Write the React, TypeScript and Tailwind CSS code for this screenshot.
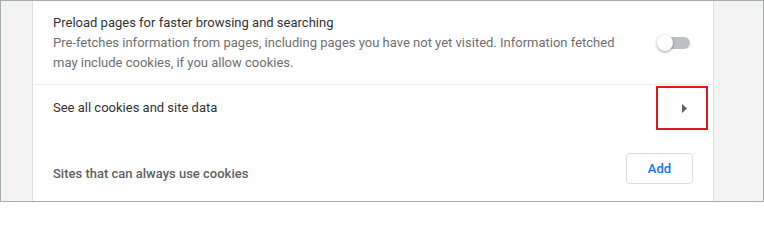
const Toggle = () => (
  <div className="relative w-[34px] h-[16px] shrink-0">
    <div className="absolute left-[6px] top-[2px] w-[27px] h-[12px] rounded-full bg-[#bdc1c6]" />
    <div className="absolute left-0 top-0 w-[16px] h-[16px] rounded-full bg-white shadow-[0_1px_3px_rgba(0,0,0,0.4)]" />
  </div>
);

export default function App() {
  return (
    <div
      className="w-[764px] h-[202px] flex border border-[#a5afac] bg-[#f3f3f3] overflow-hidden"
      style={{ fontFamily: "Roboto, 'Liberation Sans', sans-serif" }}
    >
      <div className="w-[31px] shrink-0" />

      <div className="relative w-[682px] shrink-0 bg-white border-x border-[#dedede] text-[13px]">
        <div className="h-[84px] flex items-center pl-[20px] pr-[22px] border-b border-[#eaeaea]">
          <div className="flex-1 leading-[20px]">
            <div className="text-[#333333]">
              Preload pages for faster browsing and searching
            </div>
            <div className="text-[#6f6f6f]">
              Pre-fetches information from pages, including pages you have not
              yet visited. Information fetched
              <br />
              may include cookies, if you allow cookies.
            </div>
          </div>
          <Toggle />
        </div>

        <div className="h-[46px] flex items-center pl-[20px] pr-[26px] text-[#333333]">
          <div className="flex-1">See all cookies and site data</div>
          <svg width="5" height="9" viewBox="0 0 5 9">
            <path d="M0 0 L5 4.5 L0 9 Z" fill="#616161" />
          </svg>
        </div>

        <div className="flex items-start pl-[20px] pr-[20px] pt-[22px]">
          <div className="flex-1 mt-[11px] text-[#616161] font-medium">
            Sites that can always use cookies
          </div>
          <button className="w-[67px] h-[31px] rounded-[4px] border border-[#dadce0] bg-white text-[#1a73e8] font-medium">
            Add
          </button>
        </div>

        <div className="absolute left-[623px] top-[85px] w-[52px] h-[44px] border-2 border-[#e3151f]" />
      </div>

      <div className="flex-1" />
    </div>
  );
}
